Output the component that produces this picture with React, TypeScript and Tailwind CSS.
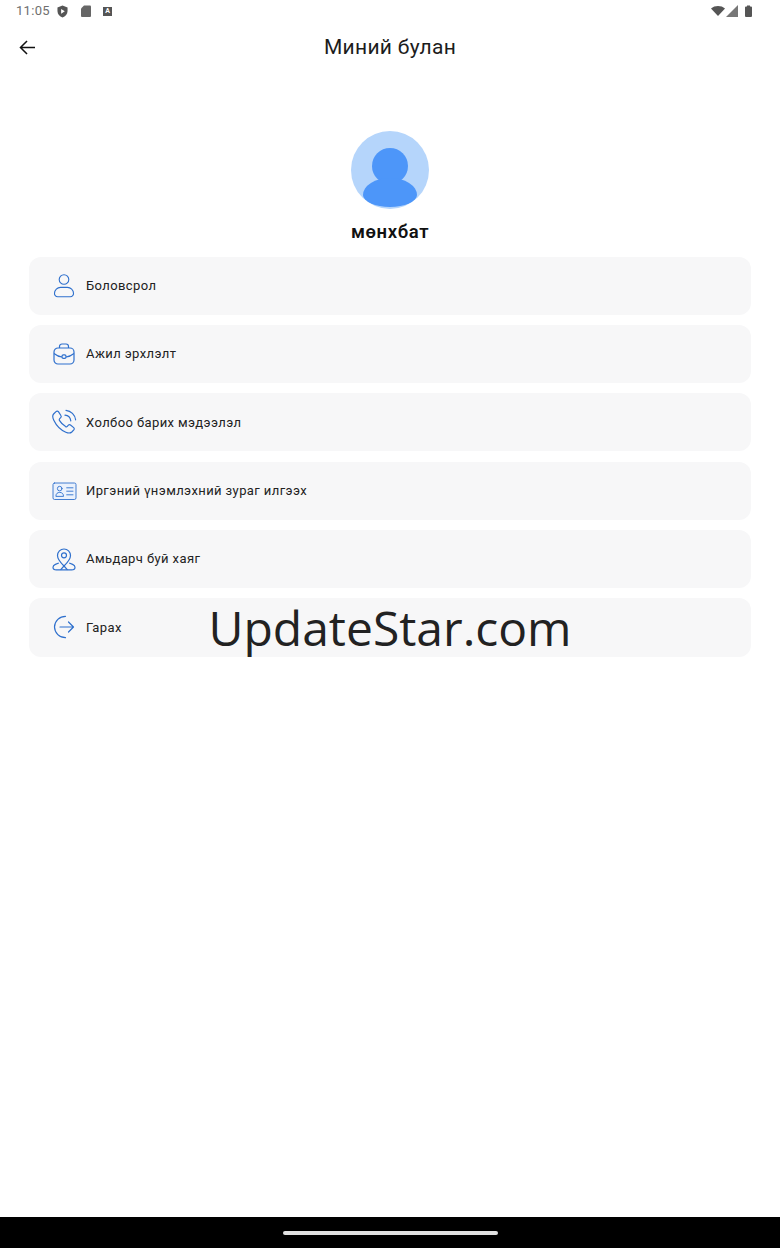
const ICON_CLASS = 'w-[26px] h-[26px] shrink-0 text-[#2f70cd]';

function UserIcon() {
  return (
    <svg viewBox="0 0 26 26" fill="none" stroke="currentColor" strokeWidth="1.100" className={ICON_CLASS}>
      <circle cx="13" cy="6.500" r="4.800" />
      <path d="M9.500 14.400h7a6 6 0 0 1 6 5.800 3.200 3.200 0 0 1-3.200 3.600H6.700a3.200 3.200 0 0 1-3.200-3.600 6 6 0 0 1 6-5.800z" />
    </svg>
  );
}

function BriefcaseIcon() {
  return (
    <svg viewBox="0 0 26 26" fill="none" stroke="currentColor" strokeWidth="1.200" className={ICON_CLASS}>
      <rect x="3" y="7" width="20" height="16" rx="4" />
      <path d="M8.500 7V5.500A2.500 2.500 0 0 1 11 3h4a2.500 2.500 0 0 1 2.500 2.500V7" />
      <path d="M3 12.500c3 2.400 6 3.300 8 3.500M23 12.500c-3 2.400-6 3.300-8 3.500" />
      <rect x="11" y="13.800" width="4" height="3.600" rx="1.400" />
    </svg>
  );
}

function PhoneIcon() {
  return (
    <svg viewBox="0 0 26 26" fill="none" stroke="currentColor" strokeWidth="1.200" strokeLinecap="round" className={ICON_CLASS}>
      <path d="M5 2.600 2.600 5c-1.200 1.200-1 3.600.2 6.200 2.400 5 7 9.800 12 12 2.400 1 4.600 1.200 6-.2l2-2.200c.6-.7.6-1.600-.1-2.200l-3.200-2.500c-.7-.5-1.500-.5-2.100.1l-1.100 1.100c-.5.5-1.100.6-1.700.3-2.500-1.500-4.600-3.600-6.200-6.200-.3-.6-.2-1.200.3-1.700l1-1c.6-.6.7-1.500.2-2.200L7.400 2.700C6.800 2 5.700 1.900 5 2.600z" />
      <path d="M14 6.200c3 .3 5.400 2.600 5.800 5.600" />
      <path d="M15 1.400c5 .5 9 4.400 9.600 9.400" />
    </svg>
  );
}

function IdCardIcon() {
  return (
    <svg viewBox="0 0 26 26" fill="none" stroke="currentColor" strokeWidth="0.900" strokeLinecap="round" className={ICON_CLASS}>
      <rect x="2" y="5" width="23" height="16.500" rx="1.600" fill="#eaf1fc" />
      <circle cx="8.700" cy="10.600" r="2.300" />
      <path d="M4.900 18c0-2.400 1.600-3.600 3.800-3.600s3.800 1.200 3.800 3.600z" />
      <path d="M15.700 9.800h6.300M15.700 13.200h6.300M15.700 16.800h6.300" />
    </svg>
  );
}

function PinIcon() {
  return (
    <svg viewBox="0 0 26 26" fill="none" stroke="currentColor" strokeWidth="1.200" strokeLinejoin="round" className={ICON_CLASS}>
      <path d="M13 20c-3.800-3.700-6.500-6.800-6.500-10.500a6.500 6.500 0 0 1 13 0C19.500 13.200 16.800 16.300 13 20z" />
      <circle cx="13" cy="9.300" r="2.500" />
      <path d="M7.800 17 4.400 18.400C2.700 19.100 2 20 2 21.200c0 1.600 1.400 2.600 3.400 2.600h15.200c2 0 3.400-1 3.400-2.600 0-1.200-.7-2.100-2.400-2.800L18.200 17" />
      <path d="M9.500 23.800 13 20l3.500 3.800" />
    </svg>
  );
}

function LogoutIcon() {
  return (
    <svg viewBox="0 0 26 26" fill="none" stroke="currentColor" strokeWidth="1.200" strokeLinecap="round" strokeLinejoin="round" className={ICON_CLASS}>
      <path d="M14.500 2.300A11 11 0 0 0 3.500 13a11 11 0 0 0 11 10.700" />
      <path d="M9 13h13.500M17.500 8l5 5-5 5" />
    </svg>
  );
}

const MENU_ITEMS = [
  { label: 'Боловсрол', icon: <UserIcon /> },
  { label: 'Ажил эрхлэлт', icon: <BriefcaseIcon /> },
  { label: 'Холбоо барих мэдээлэл', icon: <PhoneIcon /> },
  { label: 'Иргэний үнэмлэхний зураг илгээх', icon: <IdCardIcon /> },
  { label: 'Амьдарч буй хаяг', icon: <PinIcon /> },
  { label: 'Гарах', icon: <LogoutIcon /> },
];

function StatusBar() {
  return (
    <div className="h-[22px] flex items-center justify-between pl-4 pr-[28px] text-[#6f6f6f]">
      <div className="flex items-center">
        <span className="text-[13px] tracking-[0.3px] w-[36px]">11:05</span>
        <svg viewBox="0 0 12 14" className="w-[11px] h-[13px] ml-[5px]">
          <path fill="#555" d="M6 0.500 11.500 2.500v4c0 3.300-2.300 6-5.500 7-3.200-1-5.500-3.700-5.500-7v-4z" />
          <path fill="#fff" d="M4.500 4.200 8.500 6.800 4.500 9.400z" />
        </svg>
        <svg viewBox="0 0 10 12" className="w-[10px] h-[12px] ml-[13px]">
          <path fill="#666" d="M3 0.500h6a1 1 0 0 1 1 1v9.500a1 1 0 0 1-1 1H1a1 1 0 0 1-1-1V3.500z" />
        </svg>
        <span className="w-[9px] h-[9px] ml-[12px] bg-[#555] text-white text-[7px] leading-[9px] text-center font-bold">A</span>
      </div>
      <div className="flex items-center">
        <svg viewBox="0 0 14 10" className="w-[14px] h-[10px]">
          <path fill="#555" d="M0 2.500C3.800-.8 10.200-.8 14 2.500L7 10z" />
        </svg>
        <svg viewBox="0 0 12 12" className="w-[12px] h-[12px] ml-[1px]">
          <path fill="#777" d="M12 0v12H0z" />
        </svg>
        <svg viewBox="0 0 7 12" className="w-[7px] h-[12px] ml-[7px]">
          <path fill="#555" d="M2 0.500h3v1h1a1 1 0 0 1 1 1v8.500a1 1 0 0 1-1 1H1a1 1 0 0 1-1-1V2.500a1 1 0 0 1 1-1h1z" />
        </svg>
      </div>
    </div>
  );
}

export default function App() {
  return (
    <div className="relative h-[1248px] bg-white flex flex-col font-['Roboto',sans-serif] overflow-hidden">
      <StatusBar />

      <div className="relative h-[50px] flex items-center justify-center">
        <svg viewBox="0 0 18 16" fill="none" stroke="#111" strokeWidth="1.600" className="absolute left-[19px] top-[18px] w-[17px] h-[15px]">
          <path d="M17 8H1.500M8.500 1 1.500 8l7 7" />
        </svg>
        <span className="text-[21px] leading-none text-[#1c1c1c] tracking-[0.3px]">Миний булан</span>
      </div>

      <div className="flex flex-col items-center mt-[59px]">
        <div className="w-[78px] h-[78px] rounded-full bg-[#b5d5fb] overflow-hidden flex flex-col items-center">
          <div className="w-[36px] h-[36px] rounded-full bg-[#4d96f9] mt-[17px]" />
          <div className="w-[54px] h-[29px] -mt-[6px] rounded-[27px/17px_17px_12px_12px] bg-[#4d96f9]" />
        </div>
        <span className="mt-[12px] text-[18.500px] leading-[22px] font-semibold text-[#111] tracking-[0.6px]">мөнхбат</span>
      </div>

      <div className="mt-[13.500px] px-[29px] flex flex-col gap-[10.200px]">
        {MENU_ITEMS.map(({ label, icon }) => (
          <div key={label} className="h-[58.200px] rounded-[12px] bg-[#f7f7f8] flex items-center pl-[22px]">
            {icon}
            <span className="ml-[9px] text-[13px] text-[#222] tracking-[0.4px]">{label}</span>
          </div>
        ))}
      </div>

      <div className="mt-auto h-[31px] bg-black flex items-center justify-center">
        <div className="w-[215px] h-1 rounded-full bg-[#e2e2e2]" />
      </div>

      <span className="absolute left-0 right-0 top-[594px] text-center font-['Open_Sans',sans-serif] text-[48px] leading-[67px] text-[#222]">
        UpdateStar.com
      </span>
    </div>
  );
}
